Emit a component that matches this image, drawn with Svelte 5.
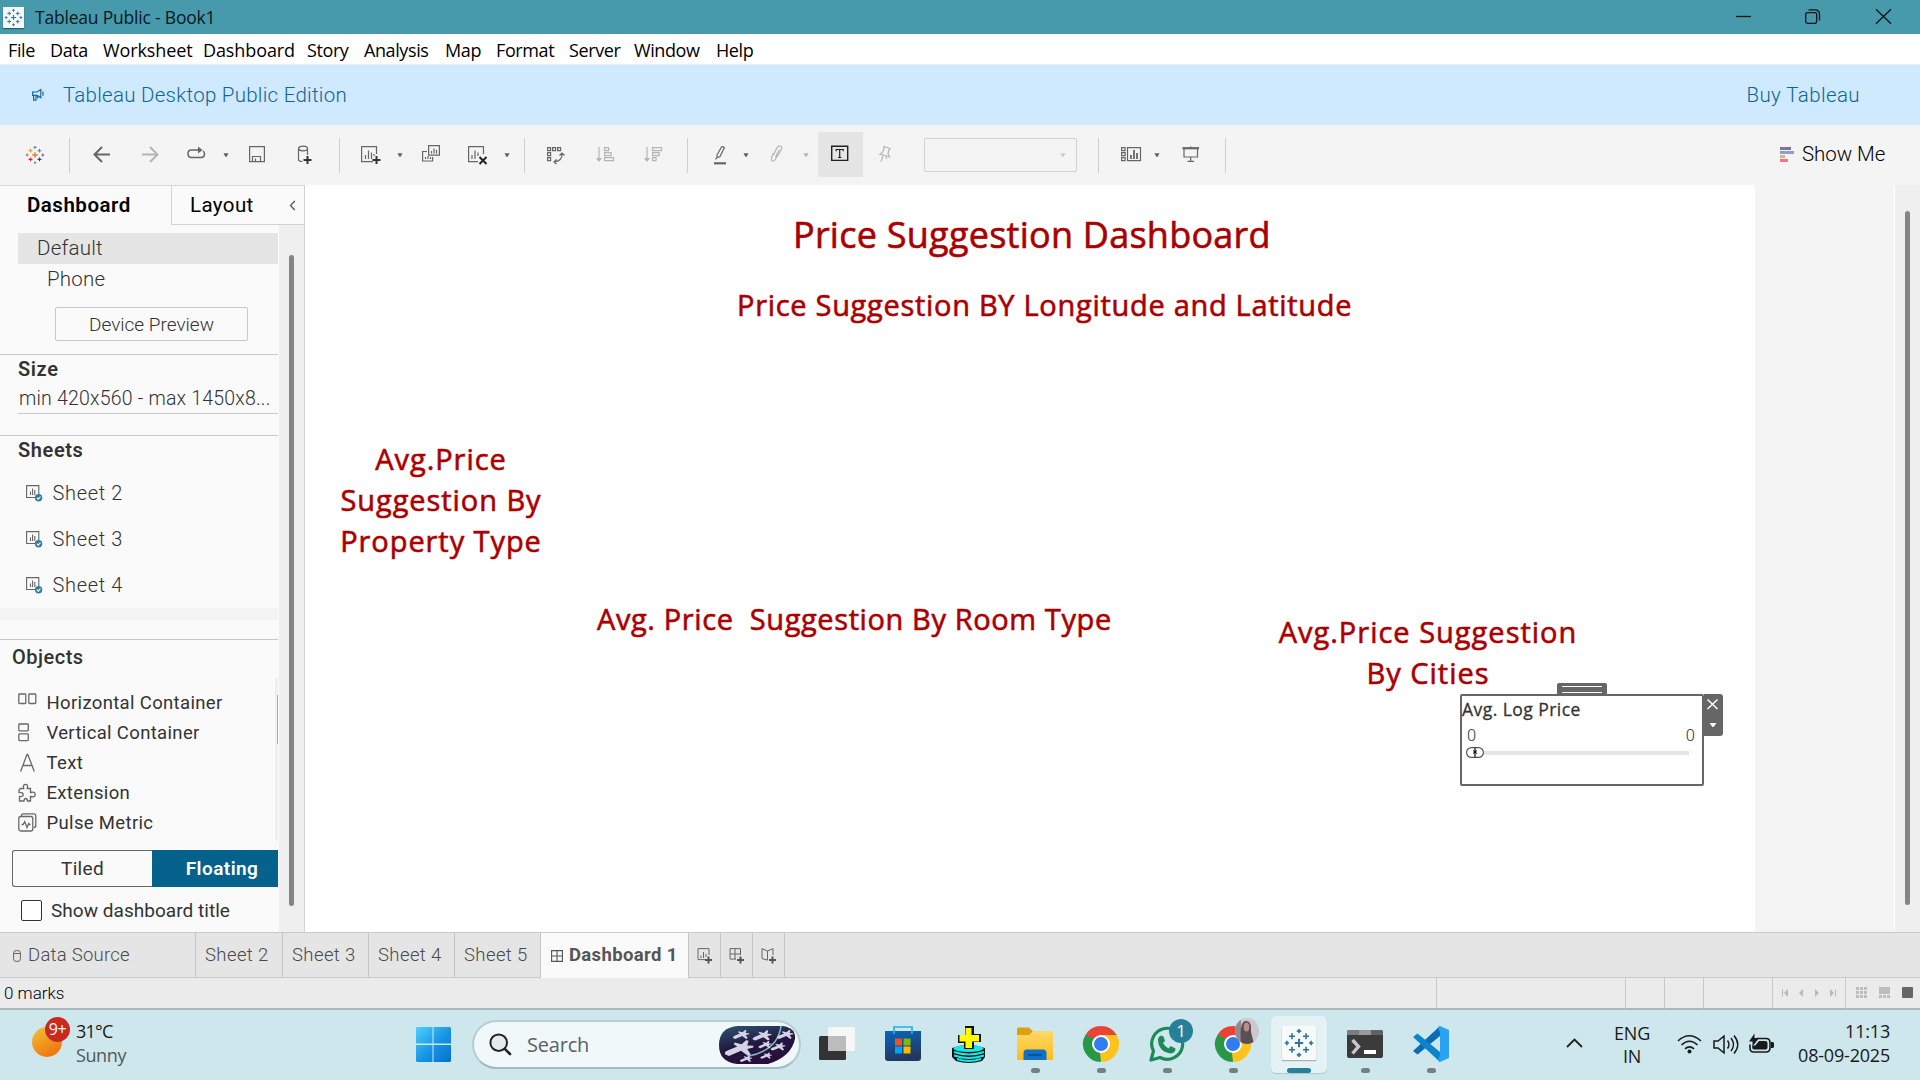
<script>
  const menus = ['File', 'Data', 'Worksheet', 'Dashboard', 'Story', 'Analysis', 'Map', 'Format', 'Server', 'Window', 'Help'];
  const sheets = ['Sheet 2', 'Sheet 3', 'Sheet 4'];
  const sheetTabs = ['Sheet 2', 'Sheet 3', 'Sheet 4', 'Sheet 5'];
  const objects = [
    ['Horizontal Container', 'horizontal'],
    ['Vertical Container', 'vertical'],
    ['Text', 'text'],
    ['Extension', 'extension'],
    ['Pulse Metric', 'pulse']
  ];
  // Crosses of the Tableau mark on a 24 unit grid: x, y, arm, colour
  const crosses = [
    [12, 12, 3.6, '#e8762b'],
    [6, 6.2, 2.6, '#eb912b'], [18, 6.2, 2.6, '#5b879b'], [6, 17.8, 2.6, '#c72037'], [18, 17.8, 2.6, '#1f457e'],
    [12, 1.8, 1.9, '#59879b'], [12, 22.2, 1.9, '#7199a6'], [1.6, 12, 1.9, '#8a7a8e'], [22.4, 12, 1.9, '#5c6692']
  ];
  // Fighter craft in the search highlight: x, y, scale
  const ships = [[22, 9, 1], [43, 10, 1.15], [66, 9, 1], [20, 23, 1.75], [46, 19, 0.8], [59, 21, 0.9], [27, 33, 0.75], [47, 30, 0.7]];
</script>

{#snippet caret(cls)}
  <svg class="ic {cls}" width="6" height="24" viewBox="0 0 6 24"><path d="M.5 10.300h5l-1.800 3.500h-1.400z" fill="currentColor" stroke="none" /></svg>
{/snippet}

{#snippet mark(size, mono)}
  <svg width={size} height={size} viewBox="0 0 24 24">
    {#each crosses as [x, y, r, c]}
      <path d="M{x - r} {y}h{2 * r}M{x} {y - r}v{2 * r}" stroke={mono ? '#2f75a6' : c} stroke-width={r > 3.5 ? 1.7 : 1.4} />
    {/each}
  </svg>
{/snippet}

{#snippet chrome()}
  <svg width="36" height="36" viewBox="0 0 36 36">
    <path d="M18 18L2.4 9A18 18 0 0 1 33.6 9z" fill="#e94335" />
    <path d="M18 18L33.6 9A18 18 0 0 1 18 36z" fill="#fcc31e" />
    <path d="M18 18L18 36A18 18 0 0 1 2.4 9z" fill="#279847" />
    <path d="M18 9h15.6L26 18z" fill="#fcc31e" /><path d="M18 9h15.6l-.5-.9H18z" fill="#e94335" />
    <path d="M10.2 22.5L2.4 9 10 12z" fill="#279847" /><path d="M25.8 22.5L18 36l-1-9z" fill="#fcc31e" />
    <circle cx="18" cy="18" r="9" fill="#fff" /><circle cx="18" cy="18" r="7" fill="#2f7df0" />
  </svg>
{/snippet}

<div class="screen">
  <header class="titlebar">
    <span class="appicon">{@render mark(17, true)}</span>
    <span class="title">Tableau Public - Book1</span>
    <svg class="winbtns" width="154" height="34" viewBox="0 0 154 34" fill="none" stroke="#0b1314" stroke-width="1.3">
      <path d="M0 16.5h15" />
      <rect x="69.7" y="12.7" width="11" height="10.6" rx="1.8" /><path d="M72.5 9.8h6.3q4.7 0 4.7 4.7v6" />
      <path d="M140 9.2l15 14.6M155 9.2l-15 14.6" />
    </svg>
  </header>

  <nav class="menubar">
    {#each menus as m}<span>{m}</span>{/each}
  </nav>

  <div class="banner">
    <svg width="13" height="14" viewBox="0 0 13 14" fill="none" stroke="#17699a" stroke-width="1.2">
      <path d="M1.600 4h4.400l3.800-2.400v8L6 7.400H1.600zM2.600 7.500v4.700h2.400V7.600M6.600 7.600v3M12 3.600v4.200" />
    </svg>
    <span class="edition">Tableau Desktop Public Edition</span>
    <span class="buy">Buy Tableau</span>
  </div>

  <div class="toolbar">
    {@render mark(18, false)}
    <i class="div"></i>
    <svg class="ic" width="18" height="24" viewBox="0 0 18 24"><path class="bold" d="M17 11.5H2M9 4L1.5 11.5 9 19" /></svg>
    <svg class="ic off" width="18" height="24" viewBox="0 0 18 24"><path class="bold" d="M1 11.5h15M9 4l7.500 7.500L9 19" /></svg>
    <svg class="ic" width="20" height="24" viewBox="0 0 20 24"><path class="mid" d="M11 7H4.500Q1 7 1 10.700 1 14.500 4.500 14.500H14q3.500 0 3.500-3.800 0-1.700-1.500-2.700" /><path d="M11 3.500l4.500 3.500-4.500 3.500z" fill="currentColor" stroke="none" /></svg>
    {@render caret('')}
    <svg class="ic" width="16" height="24" viewBox="0 0 16 24"><path d="M.6 3.600h14.800v15H.6zM3.500 18.500v-5h8v5M6.500 15.500v3" /></svg>
    <svg class="ic" width="16" height="24" viewBox="0 0 16 24"><ellipse cx="6" cy="5.500" rx="4.500" ry="2.300" /><path d="M1.500 5.500v11q0 2 4 2M10.500 5.500V12" /><path d="M10.500 13v8M6.500 17h8" stroke="#333" stroke-width="2" /></svg>
    <i class="div"></i>
    <svg class="ic" width="20" height="24" viewBox="0 0 20 24"><path d="M15.500 11V3.600H.6v15H12M4.500 16v-4M7.500 16V7.500M10.500 16V9.500M13 13v-2" /><path d="M15.500 13v8M11.500 17h8" stroke="#333" stroke-width="2" /></svg>
    {@render caret('')}
    <svg class="ic" width="18" height="24" viewBox="0 0 18 24"><path d="M6.600 2.600h10.800v9.500H6.600zM5 8.500H.6v9.500h10v-4M9.500 10.500V8M12 10.500v-5M14.500 10.500V7M3.500 16v-2M6 16v-3M8.500 16v-2" /></svg>
    <svg class="ic" width="20" height="24" viewBox="0 0 20 24"><path d="M15.500 11V3.600H.6v15H10M4 16v-4M7 16V7.500M10 13V9.500" /><path d="M11.500 14l7 7M18.500 14l-7 7" stroke="#222" stroke-width="2" /></svg>
    {@render caret('')}
    <i class="div"></i>
    <svg class="ic" width="18" height="24" viewBox="0 0 18 24"><path d="M.6 4.600h3v3h-3zM5.600 4.600h3v3h-3zM10.600 4.600h3v3h-3zM.6 9.600h3v3h-3zM.6 14.600h3v3h-3zM15 10.500q.500 7.500-8 8.500M12.500 12.500L15 10l2.500 2.500M9.500 16.500L7 19l2.500 2" /></svg>
    <svg class="ic off" width="18" height="24" viewBox="0 0 18 24"><path d="M3 4v13M8.600 4.600h4v3h-4zM8.600 9.600h6.500v3H8.600zM8.600 14.600h9v3h-9z" /><path d="M0 15h6l-3 4z" fill="currentColor" stroke="none" /></svg>
    <svg class="ic off" width="18" height="24" viewBox="0 0 18 24"><path d="M3 4v13M8.600 4.600h9v3h-9zM8.600 9.600h6.500v3H8.600zM8.600 14.600h3.500v3H8.600z" /><path d="M0 15h6l-3 4z" fill="currentColor" stroke="none" /></svg>
    <i class="div"></i>
    <svg class="ic" width="14" height="24" viewBox="0 0 14 24"><path d="M4 12L8.500 4q1.500-1 2.800.8L7 13.500l-3.200 1.300z" /><path d="M2 16l2-.5" /><path d="M1 20.300h12" stroke-width="2.200" /></svg>
    {@render caret('')}
    <svg class="ic off" width="14" height="24" viewBox="0 0 14 24"><path d="M3.500 10L1.500 15q-.5 3.500 2 3 1.500-.5 2.500-3L11 7.500q1.500-4-1-4.500-2-.3-3.200 2L3.500 12M5.500 14l4-7.500" /></svg>
    {@render caret('off')}
    <span class="tbtn"><svg class="ic" width="18" height="24" viewBox="0 0 18 24"><path d="M.7 4.200h16v14.200H.7z" stroke="#222" stroke-width="1.400" /><path d="M5.200 9.300V7.500h7v1.800M8.700 7.500v8M7 15.500h3.400" stroke="#222" /></svg></span>
    <svg class="ic off" width="14" height="24" viewBox="0 0 14 24"><path d="M6 3.500l6 2-1 1.300-1 4 1.500 3-9.500-2.500 2.500-1.800 1.500-3.700zM5 13l-2 5.500M8 14l.5 2" /></svg>
    <span class="combo">{@render caret('faint')}</span>
    <i class="div"></i>
    <svg class="ic" width="20" height="24" viewBox="0 0 20 24"><path d="M.6 4.600h3.500v3H.6zM.6 9.600h3.500v3H.6zM.6 14.600h3.500v3H.6zM6.500 4.600h13v13h-13z" /><path d="M10 16v-4M13 16V7M16 16V10" stroke-width="1.800" /></svg>
    {@render caret('')}
    <svg class="ic" width="18" height="24" viewBox="0 0 18 24"><path d="M.5 5.200h16.500" stroke-width="2.200" /><path d="M2 5.500v8.500h13.500V5.500M8.700 14v4M5.500 18.300h6.500M8.700 3.500v2" /></svg>
    <i class="div"></i>
    <svg class="sm" width="15" height="16" viewBox="0 0 15 16"><path d="M0 0h11v3H0z" fill="#857096" /><path d="M0 4h14v3H0z" fill="#82a4cc" /><path d="M0 8h5v3H0z" fill="#f5a97f" /><path d="M0 12h8v3H0z" fill="#fd7080" /></svg>
    <span class="showme">Show Me</span>
  </div>

  <main class="work">
    <aside class="side">
      <div class="sidetabs">
        <div class="tab active">Dashboard</div>
        <div class="tab other"><span>Layout</span><svg width="7" height="11" viewBox="0 0 7 11" fill="none" stroke="#555" stroke-width="1.300"><path d="M5.800 1L1.500 5.500 5.800 10" /></svg></div>
      </div>
      <div class="sidebody">
        <div class="panel">
          <div class="device default">Default</div>
          <div class="device phone">Phone</div>
          <div class="preview">Device Preview</div>
          <section class="size"><h3>Size</h3><p>min 420x560 - max 1450x8...</p></section>
          <section class="sheets">
            <h3>Sheets</h3>
            {#each sheets as s}
              <div class="sheet">
                <svg width="17" height="17" viewBox="0 0 17 17" fill="none"><path d="M9.500 12.500H.6V.6h12.200v8.500M4.500 10V6.500M6.600 10V3.500M8.800 10V5" stroke="#666" stroke-width="1.100" /><circle cx="12.600" cy="12.700" r="3.700" fill="#2f7da3" /><path d="M10.800 12.700l1.400 1.400 2.300-2.500" stroke="#fff" stroke-width="1.100" /></svg>
                <span>{s}</span>
              </div>
            {/each}
          </section>
          <div class="band"></div>
          <section class="objects">
            <h3>Objects</h3>
            <div class="objlist">
              <div class="objrows">
                {#each objects as [label, kind]}
                  <div class="obj">
                    <svg width="20" height="20" viewBox="0 0 20 20" fill="none" stroke="#696969" stroke-width="1.300">
                      {#if kind === 'horizontal'}
                        <rect x=".8" y="1" width="7" height="9.500" rx=".8" /><rect x="10.800" y="1" width="7" height="9.500" rx=".8" />
                      {:else if kind === 'vertical'}
                        <rect x=".8" y="1" width="9.500" height="6.800" rx=".8" /><rect x=".8" y="10.800" width="9.500" height="6.800" rx=".8" />
                      {:else if kind === 'text'}
                        <path d="M2.600 18.500L9 1.500h.8L16.300 18.500M4.800 12.500h9.200" />
                      {:else if kind === 'extension'}
                        <path d="M2.500 5.500h3.200Q4.800 1.300 7.500 1.300T9.300 5.500h3.200v4q4.700-1.300 4.700 2t-4.700 2v4.500H9.500q-.3-2.500-1.800-2.500T6 18H1.500V13.500q3.800.3 3.800-2t-4.300-2V7z" />
                      {:else}
                        <path d="M3.500 3.300V2.500q0-1.700 2-1.700h10.300q2 0 2 2V12.500q0 2-2 2" /><rect x=".8" y="3.500" width="14" height="14.500" rx="2" /><path d="M3.500 11.500h1.700l1.500-3 2.300 6 1.700-4 .8 1h1" />
                      {/if}
                    </svg>
                    <span>{label}</span>
                  </div>
                {/each}
              </div>
              <div class="minitrack"><i></i></div>
            </div>
            <div class="mode"><span class="tiled">Tiled</span><span class="floating">Floating</span></div>
            <label class="showtitle"><i></i><span>Show dashboard title</span></label>
          </section>
        </div>
        <div class="track"><i></i></div>
      </div>
    </aside>

    <div class="canvas">
      <div class="txt head">Price Suggestion Dashboard</div>
      <div class="txt geo">Price Suggestion BY Longitude and Latitude</div>
      <div class="txt prop">Avg.Price<br />Suggestion By<br />Property Type</div>
      <div class="txt room">Avg. Price&nbsp; Suggestion By Room Type</div>
      <div class="txt city">Avg.Price Suggestion<br />By Cities</div>

      <div class="filter">
        <div class="grip"></div>
        <div class="fcard">
          <div class="fname">Avg. Log Price</div>
          <div class="fvals"><span>0</span><span>0</span></div>
          <div class="slider">
            <svg width="18" height="11" viewBox="0 0 18 11"><rect x=".6" y=".6" width="16.800" height="9.800" rx="4.800" fill="#fff" stroke="#555" stroke-width="1.200" /><path d="M9 0v11" stroke="#444" stroke-width="1.600" /><path d="M7 3.500l4 3M11 3.500l-4 3" stroke="#000" /></svg>
            <i></i>
          </div>
        </div>
        <div class="fside">
          <svg width="20" height="42" viewBox="0 0 20 42"><path d="M3.500 5.500l10 9.500M13.500 5.500l-10 9.500" stroke="#fff" stroke-width="1.500" /><path d="M5.500 29h7l-3 4h-1z" fill="#fff" /></svg>
        </div>
      </div>
    </div>
    <div class="gutter"></div>
    <div class="vscroll"><i></i></div>
  </main>

  <div class="tabs">
    <div class="btab source">
      <svg width="8" height="12" viewBox="0 0 8 12" fill="none" stroke="#666"><rect x=".6" y=".6" width="6.800" height="10.800" rx="2.500" /><path d="M1 3.500h6" /></svg>
      <span>Data Source</span>
    </div>
    {#each sheetTabs as t}<div class="btab">{t}</div>{/each}
    <div class="btab current">
      <svg width="12" height="12" viewBox="0 0 12 12" fill="none" stroke="#555" stroke-width="1.100"><path d="M.6.6h10.800v10.800H.6zM6 .6v10.800M.6 6h10.800" /></svg>
      <span>Dashboard 1</span>
    </div>
    <div class="btab new"><svg width="16" height="18" viewBox="0 0 16 18"><path d="M12 8V1.600H1v11h7M4 11V8.500M6.500 11V5M9 10V7" /><path d="M11.500 9.500v7M8 13h7" stroke="#555" stroke-width="2" /></svg></div>
    <div class="btab new"><svg width="16" height="18" viewBox="0 0 16 18"><path d="M11.500 8V1.600H1v10.500h6M6 1.600v10.500M1 7h10.500" /><path d="M11.500 9.500v7M8 13h7" stroke="#555" stroke-width="2" /></svg></div>
    <div class="btab new"><svg width="16" height="18" viewBox="0 0 16 18"><path d="M12 8V1.600L6.500 4 1 1.600v10l5.500 1.500V4" /><path d="M11.500 9.500v7M8 13h7" stroke="#555" stroke-width="2" /></svg></div>
  </div>

  <div class="status">
    <span class="marks">0 marks</span>
    <i></i><i></i><i></i><i></i>
    <div class="pager">
      <svg width="56" height="8" viewBox="0 0 56 8" fill="#b9b9b9"><path d="M0 .5h1v7H0zM6 0v8L2 4zM21 0v8l-4-4zM33 0v8l4-4zM48 0v8l4-4zM53 .5h1v7h-1z" /></svg>
    </div>
    <div class="views">
      <svg width="58" height="12" viewBox="0 0 58 12"><path d="M0 0h3v3H0zM4 0h3v3H4zM8 0h3v3H8zM0 4h3v3H0zM4 4h3v3H4zM8 4h3v3H8zM0 8h3v3H0zM4 8h3v3H4zM8 8h3v3H8zM23 0h11v7H23zM23 8h3v3h-3zM27 8h3v3h-3zM31 8h3v3h-3z" fill="#bdbdbd" /><rect x="46" width="11" height="11" rx="1" fill="#666" /></svg>
    </div>
  </div>

  <footer class="taskbar">
    <div class="weather">
      <div class="sun"><b>9+</b></div>
      <div class="wtext"><span>31°C</span><span class="dim">Sunny</span></div>
    </div>
    <svg class="start" width="36" height="36" viewBox="0 0 36 36">
      <defs><linearGradient id="win" x1="0" y1="0" x2="1" y2="1"><stop offset="0" stop-color="#4fd0fd" /><stop offset=".55" stop-color="#1593e3" /><stop offset="1" stop-color="#0572cc" /></linearGradient></defs>
      <path d="M1 0h15.500v16.500H0V1zM17.500 0H34l1 1v15.500H17.500zM0 18h16.500v17H1l-1-1zM17.500 18H35v16l-1 1H17.500z" fill="url(#win)" />
    </svg>
    <div class="search">
      <svg width="23" height="23" viewBox="0 0 23 23" fill="none" stroke="#222"><circle cx="9.700" cy="9.700" r="8.300" stroke-width="2" fill="#e6eaeb" /><path d="M15.800 15.800l5.200 5.200" stroke-width="2.600" stroke-linecap="round" /></svg>
      <span>Search</span>
      <svg class="pic" width="78" height="38" viewBox="0 0 78 38">
        <defs>
          <linearGradient id="sky" x1=".2" y1="0" x2=".6" y2="1"><stop offset="0" stop-color="#2c4e6c" /><stop offset=".5" stop-color="#22173f" /><stop offset="1" stop-color="#2a0d3c" /></linearGradient>
          <clipPath id="cap"><path d="M18 0h46q13 2 12 13-4 18-27 25H18Q0 36 0 19T18 0z" /></clipPath>
        </defs>
        <g clip-path="url(#cap)">
          <rect width="78" height="38" fill="url(#sky)" />
          <path d="M62 0q-3 24-32 30" fill="none" stroke="#7eb8d0" stroke-width="1.600" />
          {#each ships as [x, y, s]}
            <path transform="translate({x} {y}) scale({s})" d="M-8 3q-.5-1.500 1.500-2.200L-1-1.500l-2-1.200.5-1 4 1 2.500-2.300 1.500.3-.8 2.700 3.500.2v1l-3.500.8 2 3-1.500 1-4-3-7 3z" fill="#d6d2e6" />
          {/each}
        </g>
      </svg>
    </div>

    <div class="apps">
      <div class="app"><svg width="36" height="36" viewBox="0 0 36 36"><rect x="0" y="10" width="27" height="24" rx="1.500" fill="#333" /><rect x="9" y="1" width="27" height="24" rx="1.500" fill="#f7f7f7" /><path d="M9 10h18v15H10.500L9 23.500z" fill="#bcbcbc" /></svg></div>
      <div class="app"><svg width="36" height="36" viewBox="0 0 36 36"><defs><linearGradient id="store" x1="0" y1="0" x2=".3" y2="1"><stop offset="0" stop-color="#0a67be" /><stop offset="1" stop-color="#22375f" /></linearGradient></defs><path d="M0 5h36v27q0 3-3 3H3q-3 0-3-3z" fill="url(#store)" /><path d="M9 8V1h18v7" fill="none" stroke="#22b2f0" stroke-width="1.700" /><path d="M10 12.500h7v7h-7z" fill="#f25022" /><path d="M18.500 12.500h7v7h-7z" fill="#7fba00" /><path d="M10 20.500h7v7h-7z" fill="#00a4ef" /><path d="M18.500 20.500h7v7h-7z" fill="#ffb900" /></svg></div>
      <div class="app"><svg width="36" height="38" viewBox="0 0 36 38">
        <path d="M1 22q16-6 33 0v9l-3 4q-13 4-26 0l-4-4z" fill="#111" /><ellipse cx="17.500" cy="22.500" rx="15" ry="3.500" fill="#16e6e6" /><path d="M3 26q15 5 30 0M3 29.500q15 5 30 0M6 33q12 4 24 0" fill="none" stroke="#16e6e6" stroke-width="1.900" />
        <path d="M14 0h9v8h7v8h-7v7H13v-6H7V9h7z" fill="#111" /><path d="M14.500 2h6v7h7.500v6.500h-7V22h-6.500v-6.500H8.500V9h6z" fill="#fdfd00" /></svg></div>
      <div class="app run"><svg width="36" height="36" viewBox="0 0 36 36"><defs><linearGradient id="fold" x1="0" y1="0" x2="0" y2="1"><stop offset="0" stop-color="#ffd968" /><stop offset="1" stop-color="#fdbc1c" /></linearGradient></defs><path d="M0 3q0-1.500 1.500-1.500H12L15.500 5H34v8H0z" fill="#dda013" /><path d="M0 9h12l4-4h19l1 1v27q0 1-1 1H1q-1 0-1-1z" fill="url(#fold)" /><path d="M6.500 34v-7q0-3.500 3.500-3.500h16q3.500 0 3.500 3.500v7z" fill="#0d72c5" /><path d="M11 29h14" stroke="#0a4a8a" stroke-width="1.600" /></svg></div>
      <div class="app run">{@render chrome()}</div>
      <div class="app run">
        <svg width="36" height="36" viewBox="0 0 36 36"><path d="M2 34l2.500-9A15.500 15.500 0 1 1 11 31.500z" fill="none" stroke="#1c8a56" stroke-width="3.200" stroke-linejoin="round" /><path d="M12 9.500l2.500 1 1.500 4.500-2 2q2 4 5.500 5.500l2-2.500 5 2.500q0 4.500-5 5-12-2-12.500-13.500 0-3 3-4.500z" fill="#1c8a56" /></svg>
        <b class="badge">1</b>
      </div>
      <div class="app run">
        {@render chrome()}
        <svg class="face" width="24" height="26" viewBox="0 0 24 26"><defs><clipPath id="av"><ellipse cx="12" cy="13" rx="12" ry="13" /></clipPath></defs><g clip-path="url(#av)"><rect width="24" height="26" fill="#cdc8cc" /><path d="M0 0h6v26H0z" fill="#938b93" /><path d="M6 26Q4 4 10.500 3T16 14l3 12z" fill="#5b4e54" /><ellipse cx="11.500" cy="9" rx="2.800" ry="4.500" fill="#b98f84" /></g></svg>
      </div>
      <div class="app focus"><span>{@render mark(28, true)}</span></div>
      <div class="app run"><svg width="36" height="30" viewBox="0 0 36 30"><rect width="36" height="28" rx="2" fill="#3b3b3b" /><path d="M1.500 0H12v5H0V1.500z" fill="#7c7c7c" /><path d="M12 0h12v5H12z" fill="#999" /><path d="M24 0h10.500L36 1.500V5H24z" fill="#626262" /><path d="M5.500 10l6 6.500-6 7" fill="none" stroke="#c9c9c9" stroke-width="3.400" /><path d="M17 22h12" stroke="#fff" stroke-width="4" /></svg></div>
      <div class="app run"><svg width="36" height="36" viewBox="0 0 36 36"><path d="M27 0v10L4.500 28.500 0 25z" fill="#0a6cb4" /><path d="M0 11l4.500-3.500L27 26v10z" fill="#0c84cd" /><path d="M27 0l9 4v28l-9 4-2-1 2-6V7l-2-6z" fill="#27a3f2" /></svg></div>
    </div>

    <div class="tray">
      <svg class="up" width="17" height="10" viewBox="0 0 17 10" fill="none" stroke="#222" stroke-width="1.800"><path d="M1 9l7.500-7.500L16 9" /></svg>
      <div class="lang"><span>ENG</span><span>IN</span></div>
      <svg class="sys" width="98" height="22" viewBox="0 0 98 22" fill="none" stroke="#1a1a1a" stroke-width="1.600">
        <path d="M1 7q11-10.500 23 0M4.500 11q8-7.500 16 0M8 14.800q4.500-4 9 0" /><circle cx="12.500" cy="17.500" r="2" fill="#1a1a1a" stroke="none" />
        <path d="M37 7h4l6-5v17l-6-5h-4zM50.500 6.500q3 4 0 8M54 4q5 6.500 0 13M57 1.500q7.500 9 0 18" stroke-width="1.500" />
        <path d="M80 4.500h9q4 0 4 4V14q0 4-4 4H76.500q-3.500 0-3.500-4v-3.500" /><path d="M82 7h6.500q2 0 2 2v4.500q0 2-2 2H77q-1.800 0-1.800-2v-2h3z" fill="#1a1a1a" stroke="none" /><path d="M94 8h2l1 1v4l-1 1h-2zM77.500-.5V4H82l-6.500 8.500v-5H72z" fill="#1a1a1a" stroke="none" />
      </svg>
      <div class="clock"><span>11:13</span><span>08-09-2025</span></div>
    </div>
  </footer>
</div>

<style>
  :global(body) { overflow: hidden; background: #fff; }
  * { box-sizing: border-box; }
  svg { display: block; flex: none; overflow: visible; }
  h3, p { margin: 0; }
  .screen { width: 1920px; height: 1080px; display: flex; flex-direction: column; font-family: Roboto, "Liberation Sans", sans-serif; color: #333; white-space: nowrap; overflow: hidden; }
  .screen > * { flex: none; }

  .titlebar { height: 34px; background: #479aac; display: flex; align-items: center; padding-left: 3px; font-family: "Open Sans", "Noto Sans", sans-serif; color: #08181b; }
  .appicon { width: 21px; height: 21px; background: #f5f8f9; display: grid; place-items: center; box-shadow: 0 1px 1px #26626e; }
  .title { margin-left: 11px; font-size: 17.5px; line-height: 34px; letter-spacing: -0.2px; }
  .winbtns { margin-left: auto; margin-right: 30px; }

  .menubar { height: 31px; border-bottom: 1px solid #e9eef2; padding-left: 8px; display: grid; grid-template-columns: 42px 53px 100px 104px 57px 81px 51px 73px 65px 82px auto; font: 18px/33px "Open Sans", "Noto Sans", sans-serif; color: #000; letter-spacing: -0.4px; }
  .menubar span:nth-child(3), .menubar span:nth-child(4) { letter-spacing: -0.1px; }

  .banner { height: 60px; background: #cfe9ff; display: flex; align-items: center; padding: 0 60px 0 31px; font-size: 20.5px; font-weight: 300; color: #0f6595; }
  .edition { margin-left: 19px; letter-spacing: 0.26px; }
  .buy { margin-left: auto; letter-spacing: 0.4px; }

  .toolbar { height: 60px; background: #f4f4f4; padding-left: 26px; display: grid; align-items: center; grid-template-columns: 43px 24px 48px 46px 36px 26px 48px 42px 22px 36px 25px 46px 36px 20px 23px 49px 48px 43px 26px 30px 27px 33px 15px 60px 46px 174px 23px 33px 28px 43px 555px 22px auto; }
  .ic { fill: none; stroke: currentColor; stroke-width: 1.2; color: #666; }
  .ic.off { color: #b5b5b5; }
  .ic.faint { color: #ccc; }
  .bold { stroke-width: 2; }
  .mid { stroke-width: 1.5; }
  .div { width: 1px; height: 35px; background: #cfcfcf; }
  .tbtn { width: 45px; height: 45px; background: #e5e5e5; display: flex; align-items: center; padding-left: 13px; margin-top: -2px; }
  .combo { width: 153px; height: 34px; border: 1px solid #d2d2d2; border-radius: 2px; display: flex; align-items: center; justify-content: flex-end; padding-right: 10px; }
  .showme { margin-top: -2px; font-size: 20.5px; font-weight: 300; letter-spacing: -0.05px; color: #000; }

  .work { height: 747px; display: flex; }
  .side { width: 305px; background: #fafafa; border-right: 1px solid #d2d2d2; border-top: 1px solid #d8d8d8; display: flex; flex-direction: column; }
  .sidetabs { height: 39px; display: flex; font-size: 20.5px; line-height: 38px; color: #000; }
  .tab.active { width: 171px; padding-left: 27px; font-weight: 600; letter-spacing: 0.5px; }
  .tab.other { flex: 1; border-left: 1px solid #d2d2d2; border-bottom: 1px solid #d2d2d2; display: flex; justify-content: space-between; align-items: center; padding: 0 8px 0 18px; font-weight: 400; letter-spacing: 0.4px; }
  .sidebody { flex: 1; display: flex; }
  .panel { width: 279px; padding-top: 8px; }
  .device { margin-left: 18px; width: 260px; height: 31px; line-height: 30px; font-size: 20.5px; font-weight: 300; letter-spacing: 0.22px; }
  .default { background: #e5e5e5; padding-left: 19px; }
  .phone { padding-left: 29px; }
  .preview { width: 193px; height: 34px; margin: 12px 0 0 55px; border: 1px solid #c9c9c9; border-radius: 2px; text-align: center; font-size: 19px; line-height: 33px; font-weight: 300; }
  h3 { font-size: 20px; font-weight: 600; letter-spacing: 0.6px; }
  .size { width: 278px; margin-top: 13px; border-top: 1px solid #c9c9c9; padding-left: 18px; height: 81px; }
  .size h3 { line-height: 28px; }
  .size p { height: 31px; border-bottom: 1px solid #c9c9c9; font-size: 19.5px; line-height: 32px; font-weight: 300; letter-spacing: 0.2px; padding-left: 1px; }
  .sheets { width: 278px; border-top: 1px solid #c9c9c9; padding-left: 18px; height: 173px; }
  .sheets h3 { line-height: 28px; height: 34px; }
  .sheet { height: 46px; display: flex; align-items: center; padding-left: 8px; font-size: 20px; font-weight: 300; letter-spacing: 0.65px; }
  .sheet span { margin-left: 9.5px; line-height: 46px; }
  .band { width: 278px; height: 12px; background: #f4f4f4; }
  .objects { width: 278px; margin-top: 19px; border-top: 1px solid #c9c9c9; padding-left: 12px; }
  .objects h3 { height: 38px; line-height: 34px; font-weight: 500; letter-spacing: 0.5px; }
  .objlist { height: 163px; display: flex; justify-content: space-between; }
  .objrows { padding: 10px 0 0 6px; }
  .obj { height: 30px; display: flex; align-items: center; font-size: 18.5px; letter-spacing: 0.34px; font-weight: 400; }
  .obj span { margin-left: 8.5px; line-height: 30px; }
  .minitrack { width: 3px; background: #efefef; }
  .minitrack i { display: block; margin: 17px 0 0 2px; width: 1px; height: 49px; background: #aaa; }
  .mode { height: 37px; margin-top: 9px; display: flex; font-size: 19px; line-height: 36px; letter-spacing: 0.33px; text-align: center; }
  .tiled { width: 140px; border: 1px solid #666; border-right: 0; border-radius: 3px 0 0 3px; }
  .floating { flex: 1; background: #05628d; color: #fff; font-weight: 600; padding-left: 14px; letter-spacing: 0.45px; line-height: 37px; }
  .showtitle { display: flex; align-items: center; height: 47px; padding-left: 9px; font-size: 19px; }
  .showtitle i { width: 21px; height: 21px; border: 1.5px solid #333; border-radius: 2px; background: #fff; }
  .showtitle span { margin-left: 9px; letter-spacing: 0.04px; }
  .track { flex: 1; background: #efefef; padding: 30px 0 0 10px; }
  .track i, .vscroll i { display: block; width: 5px; border-radius: 3px; background: #858585; }
  .track i { height: 651px; }

  .canvas { width: 1450px; background: #fff; position: relative; }
  .txt { position: absolute; color: #ab0000; font: 29px/41px "Open Sans", "Noto Sans", sans-serif; -webkit-text-stroke: 0.6px #ab0000; text-align: center; letter-spacing: 0.65px; }
  .head { left: 488px; top: 29px; font-size: 36px; letter-spacing: 0.25px; }
  .geo { left: 432px; top: 99px; letter-spacing: 0.7px; }
  .prop { left: 33px; top: 253px; width: 206px; letter-spacing: 0.93px; }
  .room { left: 292px; top: 413px; letter-spacing: 0.6px; }
  .city { left: 970px; top: 426px; width: 306px; letter-spacing: 1px; }

  .filter { position: absolute; left: 1155px; top: 498px; width: 263px; height: 104px; display: grid; grid-template: 11px 92px / 244px 19px; }
  .grip { grid-column: 1 / 3; margin-left: 97px; width: 50px; background: #666; border-radius: 2px 2px 0 0; padding: 3px 5px 0; }
  .grip::before { content: ""; display: block; height: 5px; border: solid #fff; border-width: 1px 0; }
  .fcard { border: 2px solid #666; border-radius: 2px; }
  .fname { padding-left: 0; height: 31px; font: 17.5px/26px "Open Sans", "Noto Sans", sans-serif; letter-spacing: 0.45px; -webkit-text-stroke: 0.3px #333; }
  .fvals { display: flex; justify-content: space-between; padding: 0 7px 0 5px; font-size: 16.5px; line-height: 17px; font-weight: 300; }
  .slider { display: flex; align-items: center; margin: 3px 0 0 4px; }
  .slider i { width: 205px; height: 4px; background: #e4e4e4; }
  .fside { height: 42px; background: #666; border-radius: 0 3px 3px 0; }
  .gutter { width: 139px; background: #f4f4f4; }
  .vscroll { flex: 1; border-left: 1px solid #fff; background: #efefef; padding: 26px 0 0 10px; }
  .vscroll i { height: 694px; }

  .tabs { height: 46px; background: #e5e5e5; border: solid #c9c9c9; border-width: 1px 0; display: grid; grid-template-columns: 196px 87px 86px 86px 86px 148px 32px 32px 32px; font-size: 18.5px; line-height: 45px; font-weight: 300; letter-spacing: 0.4px; color: #4a4a4a; }
  .btab { border-right: 1px solid #c5c5c5; padding-left: 9px; }
  .source { display: flex; align-items: center; padding-left: 13px; letter-spacing: 0.26px; }
  .source span { margin-left: 7px; }
  .current { display: flex; align-items: center; padding-left: 10px; background: #fafafa; font-weight: 700; letter-spacing: 0.35px; color: #555; }
  .current span { margin-left: 6px; line-height: 43px; }
  .new { padding: 14px 0 0 8px; }
  .new svg { fill: none; stroke: #666; }

  .status { height: 32px; background: #ebebeb; border-bottom: 2px solid #a8b8bc; display: grid; grid-template-columns: 1436px 189px 39px 39px 69px 73px auto; font-size: 17px; line-height: 31px; font-weight: 300; color: #000; }
  .marks { padding-left: 4px; }
  .status i, .pager, .views { border-left: 1px solid #c8c8c8; }
  .pager { padding: 11px 0 0 9px; }
  .views { padding: 9px 0 0 10px; }

  .taskbar { height: 70px; background: #cee7ec; display: flex; padding-left: 32px; font-family: "Open Sans", "Noto Sans", sans-serif; font-size: 18px; color: #1a1a1a; }
  .weather { width: 384px; display: flex; }
  .sun { position: relative; width: 30px; height: 30px; margin-top: 17px; border-radius: 50%; background: linear-gradient(150deg, #f2b531 15%, #f07a10 80%); }
  .sun b, .badge { position: absolute; border-radius: 50%; color: #fff; font: 400 16px/24px "Open Sans", "Noto Sans", sans-serif; text-align: center; }
  .sun b { left: 13px; top: -10px; width: 25px; height: 25px; background: #c92a1d; letter-spacing: -0.5px; }
  .wtext { margin: 9px 0 0 14px; display: flex; flex-direction: column; line-height: 24px; letter-spacing: -0.8px; }
  .dim { color: #50585a; letter-spacing: -0.4px; }
  .start { margin-top: 17px; }
  .search { width: 329px; height: 49px; margin: 10px 0 0 20px; border: 2px solid #b6cdd3; border-bottom-color: #a4b9bf; border-radius: 25px; background: #f0f8fa; display: flex; align-items: center; padding-left: 15px; font-size: 20px; color: #5b6062; }
  .search span { margin-left: 15px; letter-spacing: -0.2px; }
  .search .pic { margin-left: auto; margin-right: 2px; }
  .apps { margin-left: 3px; display: flex; }
  .app { position: relative; width: 66px; height: 70px; padding-top: 16px; display: flex; justify-content: center; align-items: flex-start; }
  .app:nth-child(9) { padding-top: 20px; }
  .run::after, .focus::after { content: ""; position: absolute; left: 29px; top: 58px; width: 9px; height: 5px; border-radius: 3px; background: #738086; }
  .focus::before { content: ""; position: absolute; inset: 6px 5px 7px; border-radius: 5px; background: #e4f2f6; box-shadow: 0 1px 1px #adc6cd; }
  .focus::after { left: 21px; width: 24px; background: #268198; }
  .focus span { position: relative; width: 34px; height: 34px; background: #f8fafa; display: grid; place-items: center; box-shadow: 0 1px 1px #a5b2b6; }
  .badge { left: 35px; top: 9px; width: 24px; height: 24px; background: #268198; font-size: 17px; }
  .face { position: absolute; left: 35px; top: 8px; }
  .tray { margin-left: auto; display: flex; padding-right: 30px; line-height: 23px; }
  .up { margin: 28px 48px 0 0; }
  .lang { width: 34px; display: flex; flex-direction: column; align-items: center; padding-top: 12px; letter-spacing: -0.2px; }
  .sys { margin: 24px 0 0 28px; }
  .clock { width: 99px; margin-left: 16px; display: flex; flex-direction: column; align-items: flex-end; line-height: 24px; padding-top: 9px; letter-spacing: -0.2px; }
  .up + .lang { margin-left: -16px; }
</style>
